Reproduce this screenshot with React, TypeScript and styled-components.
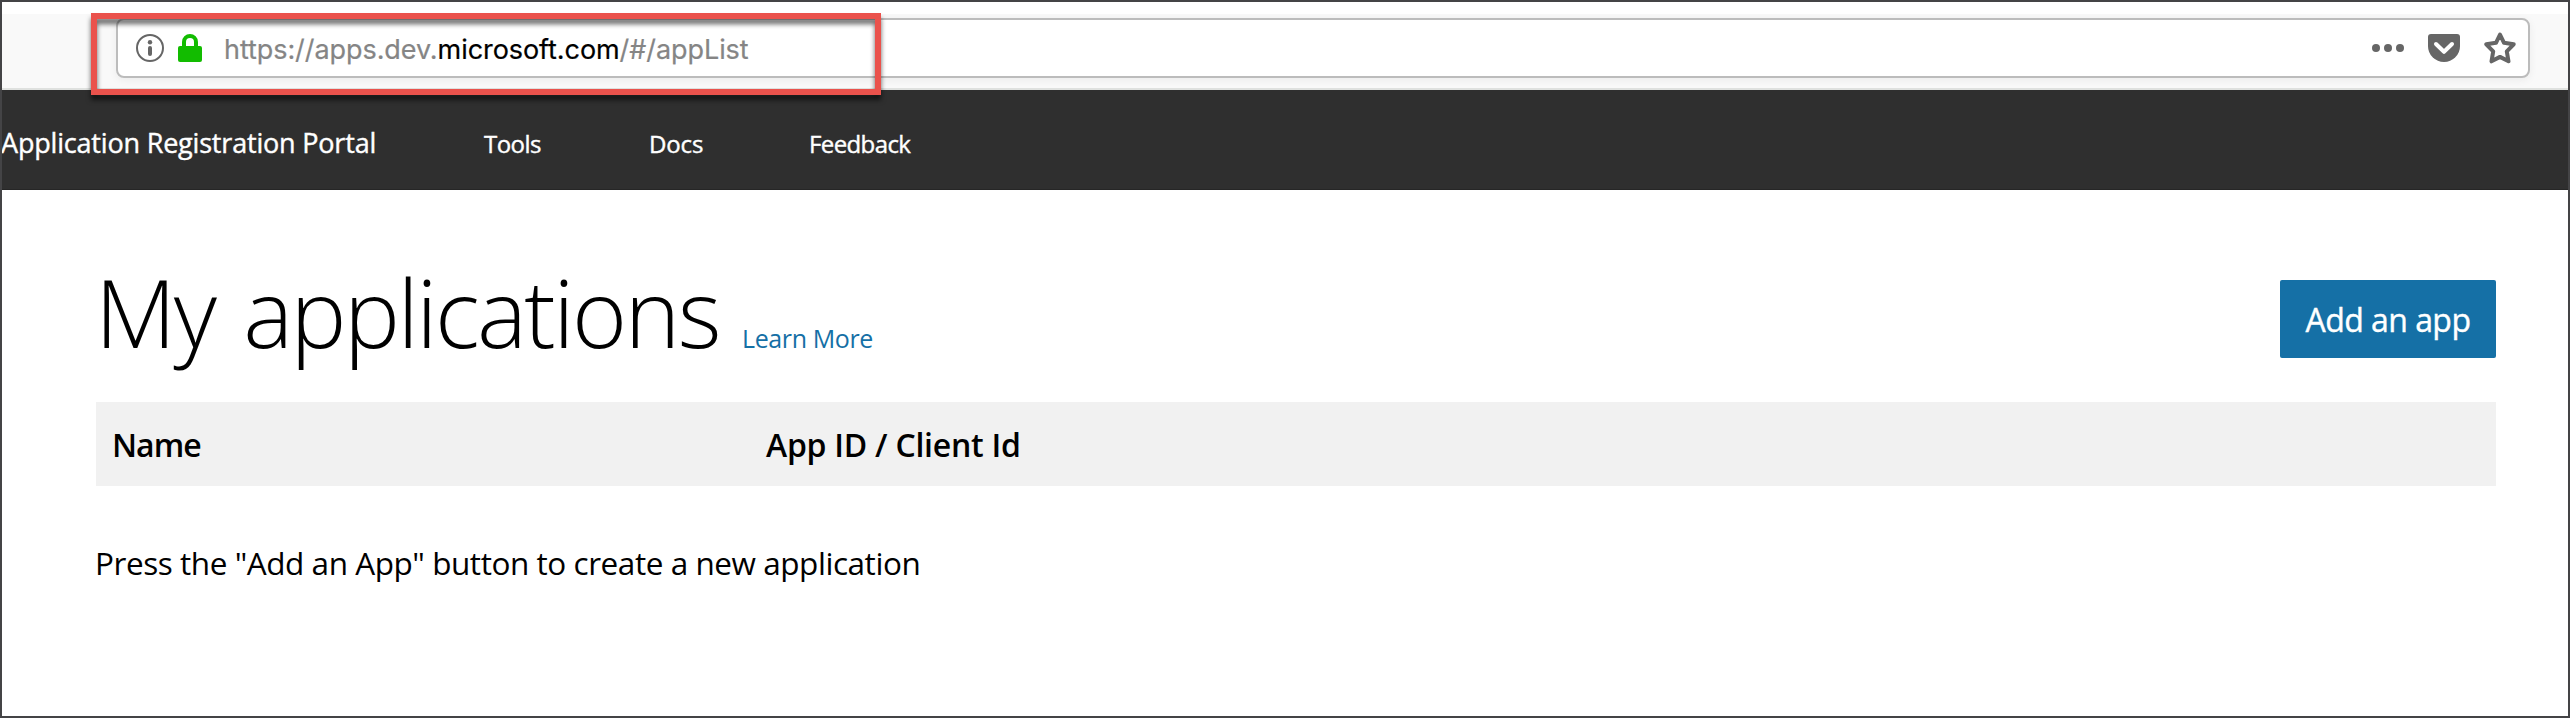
import React from "react";
import styled, { createGlobalStyle } from "styled-components";

const GlobalStyle = createGlobalStyle`
  * { box-sizing: border-box; }
  body { margin: 0; background: #fff; }
`;

const Window = styled.div`
  position: relative;
  height: 718px;
  padding-top: 12px;
  border: 2px solid #444446;
  background: #fff;
  color: #000;
  font-family: "Segoe UI", "Open Sans", sans-serif;
  overflow: hidden;
`;

const Toolbar = styled.div`
  height: 76px;
  padding: 4px 38px 0 114px;
  background: #f9f9f9;
  border-bottom: 2px solid #dfe1df;
`;

const AddressBar = styled.div`
  display: flex;
  align-items: center;
  height: 60px;
  padding: 0 12px 0 18px;
  border: 2px solid #bcbcbc;
  border-radius: 8px;
  background: #fff;
  box-shadow: 0 2px 8px rgba(0, 0, 0, 0.06);
`;

const SiteIdentity = styled.div`
  display: flex;
  gap: 14px;
  margin-right: 22px;
`;

const PageActions = styled.div`
  display: flex;
  align-items: center;
  gap: 24px;
  color: #666;
`;

const Icon = styled.svg`
  display: block;
  flex: none;
`;

const Url = styled.div`
  flex: 1;
  padding-top: 3px;
  color: #858585;
  font: 400 27px/40px "Inter", sans-serif;
  letter-spacing: -0.07px;
  white-space: nowrap;
  -webkit-text-stroke: 0.2px currentColor;
`;

const Domain = styled.span`
  color: #000;
`;

const Highlight = styled.div`
  position: absolute;
  left: 89px;
  top: 11px;
  width: 790px;
  height: 82px;
  border: 6px solid #ea524c;
  filter: drop-shadow(0 5px 2.5px rgba(0, 0, 0, 0.6));
`;

const Header = styled.nav`
  display: flex;
  align-items: baseline;
  height: 100px;
  padding-top: 34px;
  background: #2f2f2f;
  border-bottom: 1px solid #262626;
  color: #fff;
  white-space: nowrap;
  -webkit-text-stroke: 0.4px currentColor;
`;

const Brand = styled.div`
  width: 483px;
  margin-left: -1px;
  font-size: 27px;
  line-height: 38px;
  letter-spacing: -0.19px;
`;

const NavLink = styled.a<{ $width: number; $tracking: number }>`
  width: ${(p) => p.$width}px;
  font-size: 24px;
  line-height: 38px;
  letter-spacing: ${(p) => p.$tracking}px;
`;

const Content = styled.main`
  padding: 62px 72px 0 94px;
`;

const TitleRow = styled.div`
  display: flex;
  align-items: flex-start;
  justify-content: space-between;
  height: 150px;
`;

const TitleGroup = styled.div`
  display: flex;
  align-items: baseline;
  white-space: nowrap;
`;

const Title = styled.h1`
  width: 647px;
  margin: 0 0 0 -1px;
  font-size: 94px;
  font-weight: 300;
  line-height: 120px;
  letter-spacing: -2.5px;
  word-spacing: 7px;
`;

const LearnMore = styled.a`
  color: #1570a6;
  font-size: 25px;
  letter-spacing: -0.39px;
`;

const AddButton = styled.button`
  width: 216px;
  height: 78px;
  margin-top: 28px;
  padding: 1px 0 0;
  border: 0;
  border-radius: 2px;
  background: #1570a6;
  color: #fff;
  font-family: inherit;
  font-size: 32px;
  letter-spacing: -0.55px;
  white-space: nowrap;
  -webkit-text-stroke: 0.4px currentColor;
`;

const TableHeader = styled.div`
  display: grid;
  grid-template-columns: 654px 1fr;
  align-items: center;
  height: 84px;
  padding: 1px 0 0 16px;
  background: #f1f1f1;
  font-size: 32px;
  font-weight: 600;
`;

const Column = styled.div<{ $tracking: number }>`
  letter-spacing: ${(p) => p.$tracking}px;
`;

const EmptyMessage = styled.p`
  margin: 55px 0 0 -1px;
  font-size: 31.5px;
  line-height: 44px;
  letter-spacing: -0.45px;
`;

export default function App() {
  return (
    <Window>
      <GlobalStyle />
      <Toolbar>
        <AddressBar>
          <SiteIdentity>
            <Icon width="28" height="28" viewBox="0 0 28 28">
              <circle cx="14" cy="14" r="13" fill="none" stroke="#666" strokeWidth="2" />
              <circle cx="14" cy="8.2" r="2.2" fill="#666" />
              <rect x="12" y="12" width="4" height="10" rx="2" fill="#666" />
            </Icon>
            <Icon width="24" height="28" viewBox="0 0 24 28">
              <path d="M6 14V8a6 6 0 0 1 12 0v6" fill="none" stroke="#12bc00" strokeWidth="4" />
              <rect y="12" width="24" height="16" rx="2" fill="#12bc00" />
            </Icon>
          </SiteIdentity>
          <Url>
            https://apps.dev.<Domain>microsoft.com</Domain>/#/appList
          </Url>
          <PageActions>
            <Icon width="32" height="32" viewBox="0 0 32 32" fill="currentColor">
              <circle cx="4" cy="16" r="4" />
              <circle cx="16" cy="16" r="4" />
              <circle cx="28" cy="16" r="4" />
            </Icon>
            <Icon width="32" height="28" viewBox="0 0 32 28">
              <path d="M3 0H29a3 3 0 0 1 3 3v9a16 16 0 0 1-32 0V3a3 3 0 0 1 3-3z" fill="currentColor" />
              <path d="M8 10l8 7.8L24 10" fill="none" stroke="#fff" strokeWidth="4" strokeLinecap="round" strokeLinejoin="round" />
            </Icon>
            <Icon width="32" height="32" viewBox="0 0 32 32">
              <path
                d="M16 2.5L20 10.8L29.7 12.3L22.8 19.4L24.5 29.3L16 24.9L7.5 29.3L9.2 19.4L2.3 12.3L12 10.8Z"
                fill="none"
                stroke="currentColor"
                strokeWidth="4"
                strokeLinejoin="round"
              />
            </Icon>
          </PageActions>
        </AddressBar>
      </Toolbar>
      <Header>
        <Brand>Application Registration Portal</Brand>
        <NavLink $width={165} $tracking={-0.55}>Tools</NavLink>
        <NavLink $width={160} $tracking={-0.15}>Docs</NavLink>
        <NavLink $width={110} $tracking={-0.6}>Feedback</NavLink>
      </Header>
      <Content>
        <TitleRow>
          <TitleGroup>
            <Title>My applications</Title>
            <LearnMore>Learn More</LearnMore>
          </TitleGroup>
          <AddButton>Add an app</AddButton>
        </TitleRow>
        <TableHeader>
          <Column $tracking={-1}>Name</Column>
          <Column $tracking={-0.25}>App ID / Client Id</Column>
        </TableHeader>
        <EmptyMessage>Press the "Add an App" button to create a new application</EmptyMessage>
      </Content>
      <Highlight />
    </Window>
  );
}
